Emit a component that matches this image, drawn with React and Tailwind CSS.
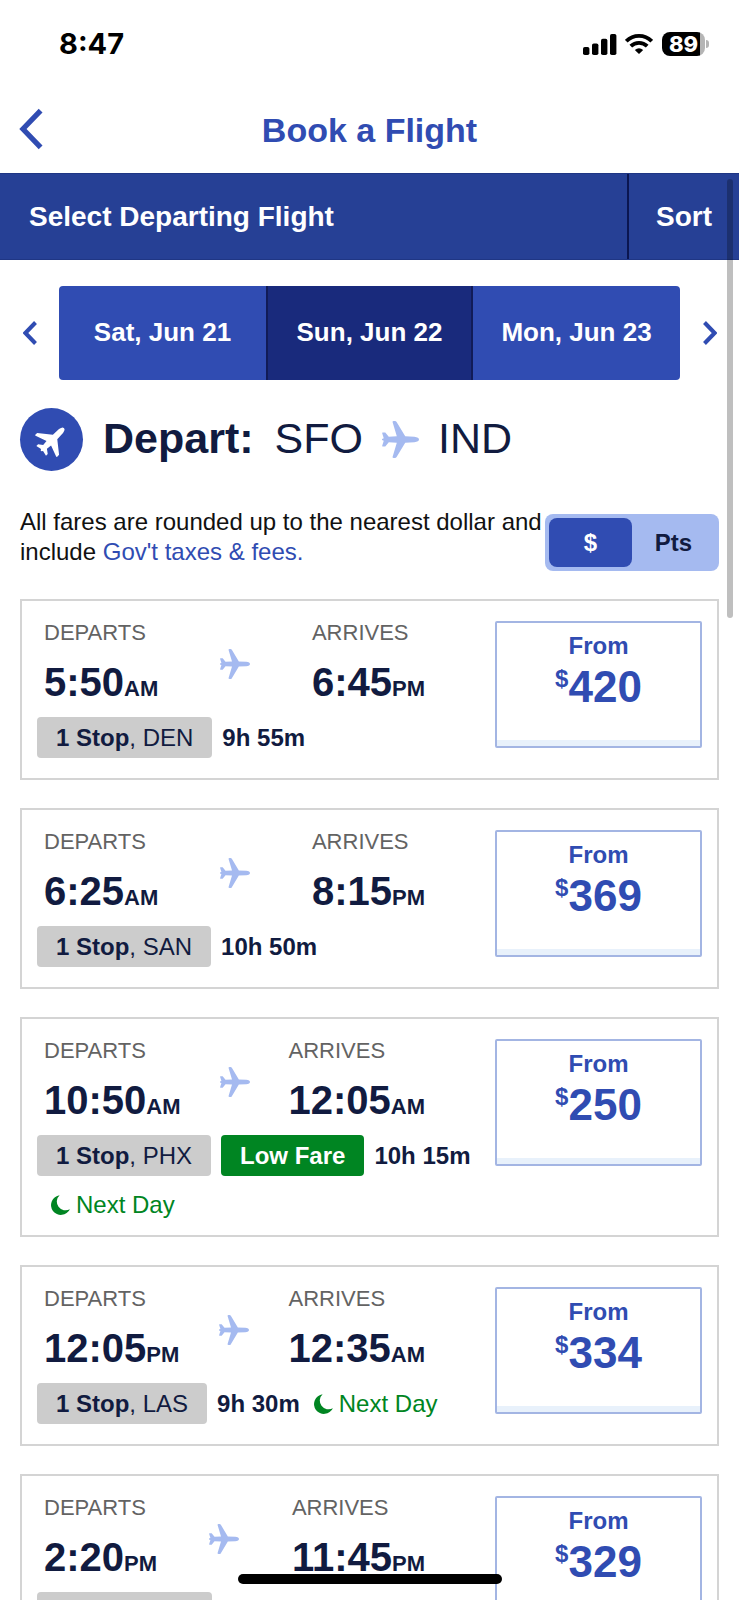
import React, { useState } from "react";

const flights = [
  { departs: "5:50", departsAmPm: "AM", arrives: "6:45", arrivesAmPm: "PM", stop: "DEN", duration: "9h 55m", price: 420 },
  { departs: "6:25", departsAmPm: "AM", arrives: "8:15", arrivesAmPm: "PM", stop: "SAN", duration: "10h 50m", price: 369 },
  { departs: "10:50", departsAmPm: "AM", arrives: "12:05", arrivesAmPm: "AM", stop: "PHX", duration: "10h 15m", price: 250, lowFare: true, nextDay: true },
  { departs: "12:05", departsAmPm: "PM", arrives: "12:35", arrivesAmPm: "AM", stop: "LAS", duration: "9h 30m", price: 334, nextDay: true },
  { departs: "2:20", departsAmPm: "PM", arrives: "11:45", arrivesAmPm: "PM", stop: "DEN", duration: "6h 25m", price: 329 },
];

const days = ["Sat, Jun 21", "Sun, Jun 22", "Mon, Jun 23"];

const Plane = ({ className }) => (
  <svg viewBox="0 0 36 36" className={className} fill="currentColor" aria-hidden="true">
    <path d="M10.2 0.8Q10.5 0 11.4 0H12.6Q13.6 0 14.2 1L22.6 14.9L31.5 15.3Q36 15.9 36 18Q36 20.1 31.5 20.7L22.6 21.1L14.2 35Q13.6 36 12.6 36H11.4Q10.5 36 10.2 35.2L14.4 21.1L6.6 20.6L3.2 24.8H0.6Q0 24.8 0.2 24L1.7 19.3L0 18.5V17.5L1.7 16.7L0.2 12Q0 11.2 0.6 11.2H3.2L6.6 15.4L14.4 14.9Z" />
  </svg>
);

const DepartPlane = () => (
  <svg viewBox="0 0 36 36" className="w-[34px] h-[34px] -rotate-45" fill="currentColor" aria-hidden="true">
    <path d="M9.4 1.6H12.2L22.6 14.7L31.5 15Q36 15.8 36 18Q36 20.2 31.5 21L22.6 21.3L12.2 34.4H9.4Q8.6 34.4 8.8 33.4L13.2 21.4L7.6 20.8L4.4 25.2H1.8L3.1 19.5L1.6 18.6V17.4L3.1 16.5L1.8 10.8H4.4L7.6 15.2L13.2 14.6L8.8 2.6Q8.6 1.6 9.4 1.6Z" />
  </svg>
);

const Moon = () => (
  <svg viewBox="0 0 20 20" className="w-5 h-5" fill="currentColor" aria-hidden="true">
    <path d="M9.6 0.2A9.9 9.9 0 1 0 19.9 14.2A8.75 8.75 0 0 1 9.6 0.2Z" />
  </svg>
);

const Chevron = ({ className, width = 3, flip = false }) => (
  <svg viewBox="0 0 14 24" className={className} fill="none" stroke="currentColor" strokeWidth={width} aria-hidden="true">
    <path d={flip ? "M1.5 1.5L11.6 12L1.5 22.5" : "M12.5 1.5L2.4 12L12.5 22.5"} />
  </svg>
);

const StatusBar = () => (
  <div className="h-[88px] shrink-0 flex items-center justify-between pl-[59px] pr-[30px] text-black">
    <span className="font-['Inter'] text-[29px] leading-8 font-bold">8:47</span>
    <div className="flex items-center">
      <svg viewBox="0 0 34 21" className="w-[34px] h-[21px] mr-2" fill="currentColor" aria-hidden="true">
        <rect x="0" y="13" width="6.4" height="8" rx="1.8" />
        <rect x="9" y="9.4" width="6.4" height="11.6" rx="1.8" />
        <rect x="18" y="4.8" width="6.4" height="16.2" rx="1.8" />
        <rect x="27" y="0" width="6.4" height="21" rx="1.8" />
      </svg>
      <svg viewBox="0 0 28 20" className="w-7 h-5 mr-[9px]" fill="none" stroke="currentColor" strokeWidth="3.8" aria-hidden="true">
        <path d="M1.3 7.2A18 18 0 0 1 26.7 7.2" />
        <path d="M5.8 12.2A11.6 11.6 0 0 1 22.2 12.2" />
        <path d="M14 20L9.8 16Q14 12.6 18.2 16Z" fill="currentColor" stroke="none" />
      </svg>
      <div className="w-[43px] h-6 rounded-lg bg-[linear-gradient(to_right,#000_89%,#b5b5b5_89%)] text-white flex items-center justify-center">
        <span className="font-['Inter'] text-[22px] leading-6 font-extrabold">89</span>
      </div>
      <div className="w-[3px] h-2 ml-px rounded-r bg-[#b5b5b5]" />
    </div>
  </div>
);

const TimeBlock = ({ label, time, amPm }) => (
  <div>
    <div className="text-[22px] leading-6 text-[#636363]">{label}</div>
    <div className="mt-[15px] text-[40px] leading-[44px] font-bold">
      {time}
      <span className="text-[22px] leading-6">{amPm}</span>
    </div>
  </div>
);

const FlightCard = ({ flight }) => (
  <li className="flex items-start gap-[15px] border-2 border-[#d4d4d4] px-[15px] py-5">
    <div className="flex-1">
      <div className="flex justify-between pl-[7px] pr-[55px]">
        <TimeBlock label="DEPARTS" time={flight.departs} amPm={flight.departsAmPm} />
        <Plane className="w-[30px] h-[30px] mt-7 text-[#a5baf0]" />
        <TimeBlock label="ARRIVES" time={flight.arrives} amPm={flight.arrivesAmPm} />
      </div>
      <div className="mt-[13px] flex flex-wrap items-center gap-y-[19px] text-2xl">
        <span className="mr-2.5 px-[19px] rounded bg-[#cccccc] leading-[41px]">
          <b>1 Stop</b>, {flight.stop}
        </span>
        {flight.lowFare && (
          <span className="mr-2.5 px-[19px] rounded bg-[#008522] text-white font-bold leading-[41px]">
            Low Fare
          </span>
        )}
        <span className="font-bold leading-[41px]">{flight.duration}</span>
        {flight.nextDay && (
          <span className="pl-[13px] flex items-center gap-1.5 leading-5 text-[#008522]">
            <Moon />
            Next Day
          </span>
        )}
      </div>
    </div>
    <button className="w-[207px] h-[127px] pt-2 flex flex-col items-center rounded-xs border-2 border-[#a3b5e3] bg-white shadow-[inset_0_-6px_0_#e8f1fb] text-[#304cb2] font-bold">
      <span className="text-2xl leading-[30px]">From</span>
      <span className="mt-1 flex items-start">
        <span className="text-2xl leading-7">$</span>
        <span className="text-[44px] leading-[44px]">{flight.price}</span>
      </span>
    </button>
  </li>
);

const App = () => {
  const [selectedDay, setSelectedDay] = useState(1);
  const [currency, setCurrency] = useState("usd");

  return (
    <div className="relative h-screen overflow-hidden flex flex-col bg-white text-[#111b40] font-['Liberation_Sans',sans-serif]">
      <StatusBar />

      <header className="h-[85px] shrink-0 grid grid-cols-[60px_1fr_60px] items-center text-[#304cb2]">
        <button aria-label="Back" className="pl-[18px] pb-1">
          <Chevron className="w-[26px] h-[42px]" />
        </button>
        <h1 className="pb-0.5 text-center text-[34px] leading-10 font-bold">Book a Flight</h1>
      </header>

      <main className="flex-1 min-h-0 overflow-hidden">
        <div className="h-[87px] flex items-stretch bg-[#264095] border-y border-[#1f3684] text-white text-[28px] font-bold">
          <h2 className="flex-1 pl-[29px] self-center">Select Departing Flight</h2>
          <button className="w-[112px] border-l-2 border-[#0b1650]">Sort</button>
        </div>

        <div className="mt-[26px] flex items-center text-[#304cb2]">
          <button aria-label="Previous day" className="w-[59px] flex justify-center">
            <Chevron className="w-[14px] h-6" width={4} />
          </button>
          <div className="flex-1 h-[94px] grid grid-cols-3 rounded overflow-hidden text-white text-[26px] font-bold">
            {days.map((day, index) => (
              <button
                key={day}
                onClick={() => setSelectedDay(index)}
                className={
                  index === selectedDay
                    ? "pb-0.5 bg-[#192a7c] border-x-2 border-[#111b57]"
                    : "pb-0.5 bg-[#304cb2]"
                }
              >
                {day}
              </button>
            ))}
          </div>
          <button aria-label="Next day" className="w-[59px] flex justify-center">
            <Chevron className="w-[14px] h-6" width={4} flip />
          </button>
        </div>

        <div className="mt-7 pl-5 flex items-center text-[43px] leading-[50px]">
          <span className="w-[63px] h-[63px] rounded-full bg-[#304cb2] text-white flex items-center justify-center">
            <DepartPlane />
          </span>
          <h3 className="ml-5 pb-1 font-bold">Depart:</h3>
          <span className="ml-[21px] pb-1">SFO</span>
          <Plane className="w-[37px] h-[37px] mx-[19px] text-[#a5baf0]" />
          <span className="pb-1">IND</span>
        </div>

        <div className="mt-9 px-5 flex items-start">
          <p className="flex-1 text-2xl leading-[30px] text-[#111111]">
            All fares are rounded up to the nearest dollar and include{" "}
            <a href="#taxes" className="text-[#304cb2]">
              Gov't taxes &amp; fees.
            </a>
          </p>
          <div className="mt-[7px] w-[174px] h-[57px] shrink-0 p-1 grid grid-cols-2 rounded-lg bg-[#a5baf0] text-2xl font-bold">
            <button
              onClick={() => setCurrency("usd")}
              className={currency === "usd" ? "rounded-lg bg-[#304cb2] text-white" : "rounded-lg"}
            >
              $
            </button>
            <button
              onClick={() => setCurrency("pts")}
              className={currency === "pts" ? "rounded-lg bg-[#304cb2] text-white" : "rounded-lg"}
            >
              Pts
            </button>
          </div>
        </div>

        <ul className="mt-7 px-5 flex flex-col gap-7">
          {flights.map((flight) => (
            <FlightCard key={flight.departs} flight={flight} />
          ))}
        </ul>
      </main>

      {/* scroll thumb and home indicator float over the page */}
      <div className="absolute top-[179px] right-[6px] w-[6px] h-[439px] rounded-full bg-black/25" />
      <div className="absolute bottom-4 left-1/2 -translate-x-1/2 w-[264px] h-[10px] rounded-full bg-black" />
    </div>
  );
};

export default App;
